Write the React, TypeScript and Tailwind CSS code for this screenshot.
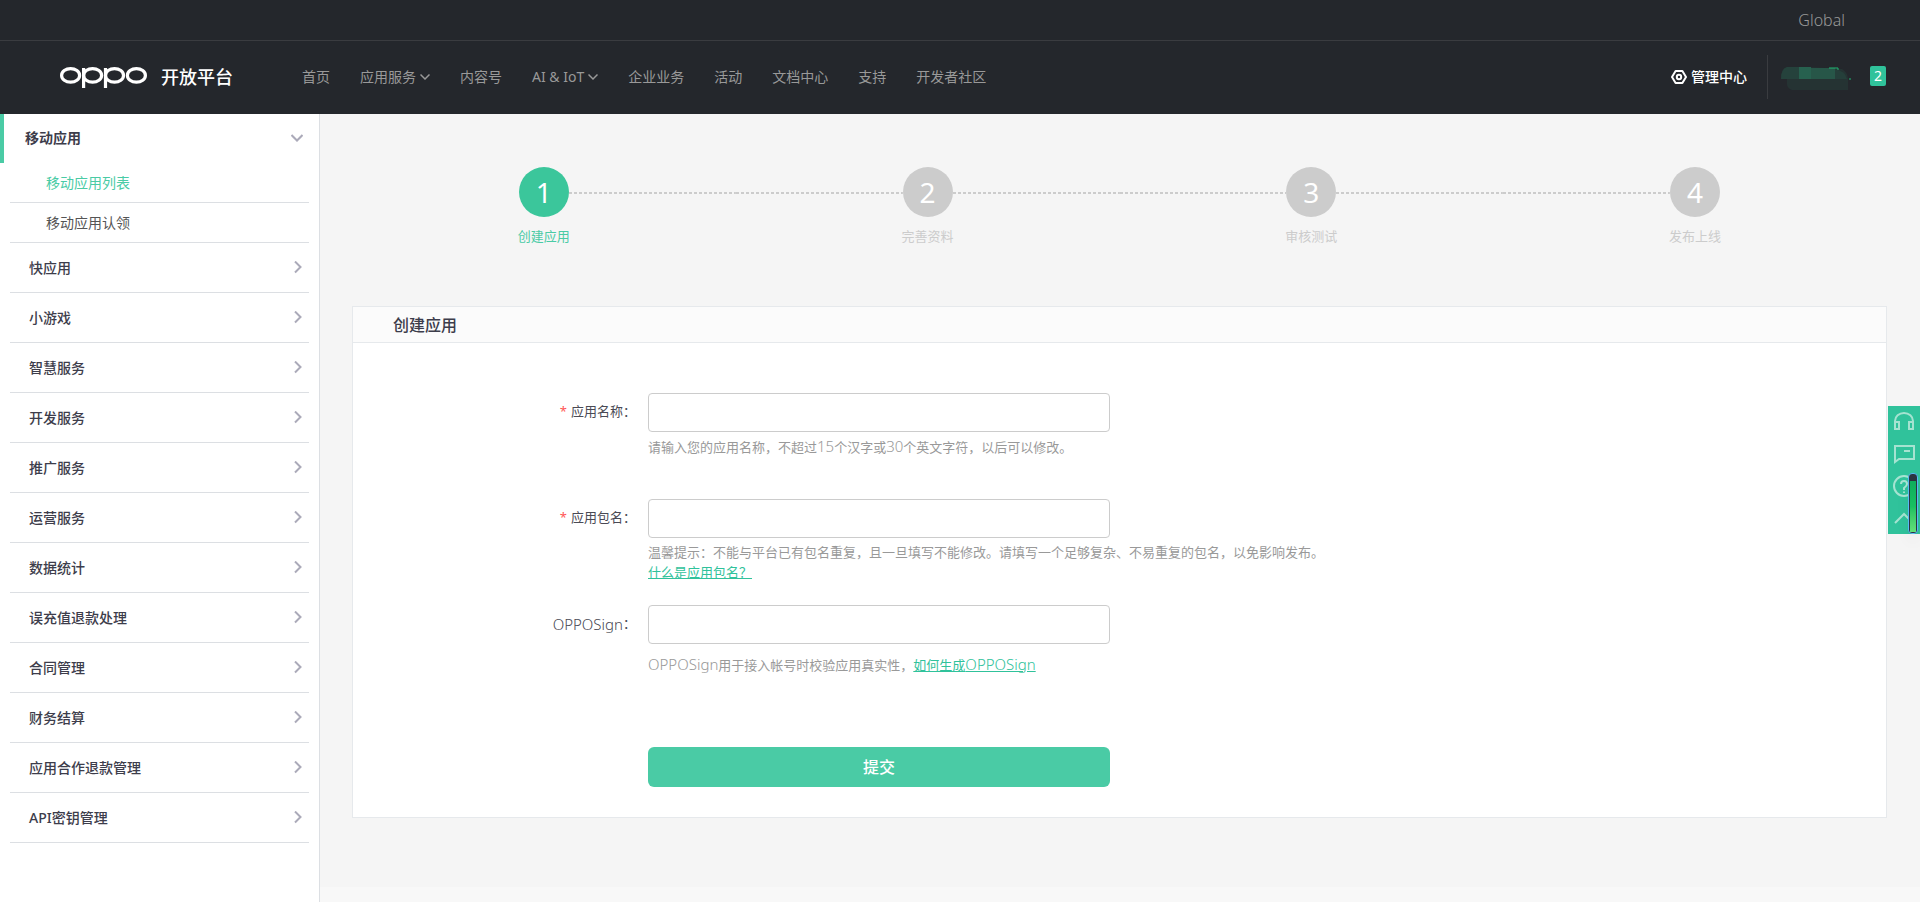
import React, { useState } from "react";

interface NavItem {
  name: string;
  arrow?: boolean;
}

interface FieldProps {
  id: string;
  label: React.ReactNode;
  required?: boolean;
  value: string;
  onChange: (value: string) => void;
  children: React.ReactNode;
}

const navItems: NavItem[] = [
  { name: "首页" },
  { name: "应用服务", arrow: true },
  { name: "内容号" },
  { name: "AI & IoT", arrow: true },
  { name: "企业业务" },
  { name: "活动" },
  { name: "文档中心" },
  { name: "支持" },
  { name: "开发者社区" },
];

const menuItems = [
  "快应用",
  "小游戏",
  "智慧服务",
  "开发服务",
  "推广服务",
  "运营服务",
  "数据统计",
  "误充值退款处理",
  "合同管理",
  "财务结算",
  "应用合作退款管理",
  "API密钥管理",
];

const steps = ["创建应用", "完善资料", "审核测试", "发布上线"];

const Logo = () => (
  <svg width="87" height="23" viewBox="0 -2 87 23" fill="none" stroke="#fff" strokeWidth="3.2">
    <ellipse cx="10.6" cy="8.4" rx="9" ry="6.8" />
    <ellipse cx="32.6" cy="8.4" rx="9" ry="6.8" />
    <ellipse cx="54.5" cy="8.4" rx="9" ry="6.8" />
    <ellipse cx="76.4" cy="8.4" rx="9" ry="6.8" />
    <path d="M23.6 1V21M45.5 1V21" />
  </svg>
);

const ChevronRight = () => (
  <svg width="8" height="14" viewBox="0 0 8 14" fill="none" stroke="#abaab9" strokeWidth="2">
    <path d="M1 0.5l5.5 5.5L1 11.5" />
  </svg>
);

const StepLine = () => (
  <svg className="h-1 w-full" stroke="#ccc" strokeWidth="2" strokeDasharray="3 2">
    <line x1="0" y1="3" x2="100%" y2="3" />
  </svg>
);

const Header = () => (
  <header className="bg-[#24272c]">
    <div className="flex h-10 items-center justify-end pr-[75px]">
      <a href="#" className="text-base font-light text-[#999]">
        Global
      </a>
    </div>
    <div className="flex h-[74px] items-center border-t border-[#3a3c40] pr-[34px] pb-[2px] pl-[60px]">
      <a href="#" className="flex items-center gap-[14px]">
        <Logo />
        <span className="text-lg leading-6 font-medium text-white">开放平台</span>
      </a>
      <nav className="ml-[69px] flex gap-[30px] text-sm text-[#999]">
        {navItems.map((item) => (
          <a key={item.name} href="#" className="flex items-center gap-1">
            {item.name}
            {item.arrow && (
              <svg width="10" height="8" viewBox="0 0 10 8" fill="none" stroke="#999" strokeWidth="1.5">
                <path d="M0.5 1.5L5 6l4.5-4.5" />
              </svg>
            )}
          </a>
        ))}
      </nav>
      <a href="#" className="ml-auto flex items-center gap-1 text-sm font-medium text-white">
        <svg width="16" height="16" viewBox="0 0 16 16" fill="none" stroke="#fff" strokeWidth="2">
          <path d="M4.6 2h6.8L15 8l-3.600 6H4.600L1 8z" strokeLinejoin="round" />
          <circle cx="8" cy="8" r="2.2" />
        </svg>
        管理中心
      </a>
      <div className="ml-5 h-11 border-l border-[#3a3c40]" />
      <svg className="ml-3" width="74" height="26" viewBox="0 0 74 26">
        <path d="M1 14Q1 4 7 3h21l34 2q5 3 6 9v12H12q-5-2-5-6v-5z" fill="#253333" />
        <path d="M7 3h12v12H1Q1 5 7 3z" fill="#25423c" />
        <path d="M19 3h12v12H19z" fill="#27614f" />
        <path d="M31 4h24v11H31z" fill="#275648" />
        <path d="M55 5q10 2 12 10H55z" fill="#253f3a" />
        <path d="M49 4h9v2M69 15h2" stroke="#21b573" fill="none" />
      </svg>
      <span className="mb-[2px] ml-4 flex h-5 w-4 items-center justify-center rounded-xs bg-[#30c29b] text-sm text-white">
        2
      </span>
    </div>
  </header>
);

const Sidebar = () => (
  <aside className="w-80 shrink-0 border-r border-[#dcdfe3] bg-white text-sm text-[#3d3d4b]">
    <button
      type="button"
      className="flex h-[49px] w-full items-center justify-between border-l-4 border-[#4acba5] pr-4 pb-[2px] pl-[21px] font-bold"
    >
      移动应用
      <svg width="12" height="8" viewBox="0 0 12 8" fill="none" stroke="#abaab9" strokeWidth="2">
        <path d="M0.5 1L6 6.5 11.500 1" />
      </svg>
    </button>
    <ul className="px-[10px]">
      <li className="border-b border-[#dcdfe3]">
        <a href="#" className="flex h-[39px] items-center pl-9 text-[#4acba5]">
          移动应用列表
        </a>
      </li>
      <li className="border-b border-[#dcdfe3]">
        <a href="#" className="flex h-[39px] items-center pl-9 text-[#555]">
          移动应用认领
        </a>
      </li>
      {menuItems.map((name) => (
        <li key={name} className="border-b border-[#dcdfe3]">
          <button
            type="button"
            className="flex h-[49px] w-full items-center justify-between pr-[7px] pl-[19px] font-medium"
          >
            {name}
            <ChevronRight />
          </button>
        </li>
      ))}
    </ul>
  </aside>
);

const Steps = ({ current }: { current: number }) => (
  <ol className="flex">
    {steps.map((name, index) => (
      <li key={name} className="flex flex-1 flex-col items-center">
        <div className="flex w-full items-center">
          <span className="flex-1">{index > 0 && <StepLine />}</span>
          <span
            className={`flex size-[50px] items-center justify-center rounded-full text-[28px] text-white ${
              index === current ? "bg-[#3bc69b]" : "bg-[#ccc]"
            }`}
          >
            {index + 1}
          </span>
          <span className="flex-1">{index < steps.length - 1 && <StepLine />}</span>
        </div>
        <span
          className={`mt-[9px] text-[13px] leading-5 ${
            index === current ? "text-[#4acba5]" : "text-[#ccc]"
          }`}
        >
          {name}
        </span>
      </li>
    ))}
  </ol>
);

const Field: React.FC<FieldProps> = ({ id, label, required, value, onChange, children }) => (
  <div className="flex h-[106px] items-start">
    <label
      htmlFor={id}
      className="flex h-[38px] w-[295px] shrink-0 items-center justify-end pr-3 text-[13px] text-[#4a4a55]"
    >
      {required && <span className="mr-1 text-[#f55]">*</span>}
      {label}：
    </label>
    <div className="flex-1">
      <input
        id={id}
        type="text"
        value={value}
        onChange={(e) => onChange(e.target.value)}
        className="block h-[39px] w-full max-w-[462px] rounded border border-[#ccc] bg-white px-3 text-sm outline-none"
      />
      <div className="text-[13px] leading-5 text-[#999]">{children}</div>
    </div>
  </div>
);

const FloatingBar = () => (
  <div className="fixed top-[406px] right-0 h-32 w-8 bg-[#30c29b]">
    <svg width="32" height="128" viewBox="0 0 32 128" fill="none" stroke="#a5e3d1" strokeWidth="2">
      <path d="M7 17V15a9 8 0 0 1 18 0v2M7 16h4v7H7zM21 16h4v7h-4z" />
      <path d="M7 40h19v13H11l-4 3zM16 45h6" />
      <circle cx="16" cy="80" r="10" />
      <path d="M13 78q0-3 3-3t3 3q0 2-3 4v2M16 85.500v1.500" />
      <path d="M7 117l9-9 9 9" />
    </svg>
    <div className="absolute top-[67px] right-[2px] flex h-[61px] w-[10px] items-end rounded-sm border border-[#58b9f4] bg-[#2b3440] p-px shadow-lg">
      <div className="h-[51px] w-full bg-linear-to-b from-[#0fae5c] via-[#18c060] to-[#62e078]" />
    </div>
  </div>
);

const App = () => {
  const [name, setName] = useState("");
  const [packageName, setPackageName] = useState("");
  const [sign, setSign] = useState("");

  return (
    <div className="flex min-h-screen flex-col font-['Noto_Sans','Noto_Sans_CJK_SC',sans-serif]">
      <Header />
      <div className="flex flex-1">
        <Sidebar />
        <div className="flex min-w-0 flex-1 flex-col bg-[#f8f8f8]">
          <main className="bg-[#f5f5f5] pt-[53px] pr-[33px] pb-[69px] pl-8">
            <Steps current={0} />
            <section className="mt-[60px] border border-[#e6e9ec] bg-white">
              <h1 className="flex h-9 items-center border-b border-[#e6e9ec] bg-[#fbfbfb] pl-10 text-base font-medium text-[#3d3d4b]">
                创建应用
              </h1>
              <form className="pt-[50px] pb-[30px]" onSubmit={(e) => e.preventDefault()}>
                <Field id="name" label="应用名称" required value={name} onChange={setName}>
                  <p className="mt-1">
                    请输入您的应用名称，不超过
                    <span className="text-[15px] font-light">15</span>个汉字或
                    <span className="text-[15px] font-light">30</span>
                    个英文字符，以后可以修改。
                  </p>
                </Field>
                <Field
                  id="package"
                  label="应用包名"
                  required
                  value={packageName}
                  onChange={setPackageName}
                >
                  <p className="mt-1">
                    温馨提示：不能与平台已有包名重复，且一旦填写不能修改。请填写一个足够复杂、不易重复的包名，以免影响发布。
                  </p>
                  <a href="#" className="text-[#30c29b] underline">
                    什么是应用包名？
                  </a>
                </Field>
                <Field
                  id="sign"
                  label={<span className="text-[15px] font-light">OPPOSign</span>}
                  value={sign}
                  onChange={setSign}
                >
                  <p className="mt-[10px]">
                    <span className="text-[15px] font-light">OPPOSign</span>
                    用于接入帐号时校验应用真实性，
                    <a href="#" className="text-[#30c29b] underline">
                      如何生成<span className="text-[15px] font-light">OPPOSign</span>
                    </a>
                  </p>
                </Field>
                <div className="mt-9 pl-[295px]">
                  <button
                    type="submit"
                    className="h-10 w-full max-w-[462px] cursor-pointer rounded-md bg-[#4acba5] text-base font-medium text-white"
                  >
                    提交
                  </button>
                </div>
              </form>
            </section>
          </main>
        </div>
      </div>
      <FloatingBar />
    </div>
  );
};

export default App;
